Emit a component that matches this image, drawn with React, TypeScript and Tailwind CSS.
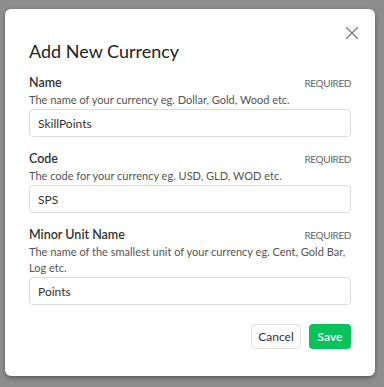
import { X } from 'lucide-react';

const fields = [
  {
    label: 'Name',
    hint: 'The name of your currency eg. Dollar, Gold, Wood etc.',
    value: 'SkillPoints',
  },
  {
    label: 'Code',
    hint: 'The code for your currency eg. USD, GLD, WOD etc.',
    value: 'SPS',
  },
  {
    label: 'Minor Unit Name',
    hint: 'The name of the smallest unit of your currency eg. Cent, Gold Bar, Log etc.',
    value: 'Points',
  },
];

const Field: React.FC<{ label: string; hint: string; value: string }> = ({ label, hint, value }) => {
  return (
    <div className="flex flex-col">
      <div className="flex items-center justify-between h-5">
        <span className="text-[12.5px] font-semibold text-[#333]">{label}</span>
        <span className="text-[10px] tracking-[-0.4px] text-[#666]">REQUIRED</span>
      </div>
      <p className="text-[11px] leading-4 text-[#555] mt-[-1px]">{hint}</p>
      <input
        readOnly
        value={value}
        className="mt-[1px] h-7 w-full rounded border border-[#dcdcdc] px-2 text-[12px] text-[#333] outline-none"
      />
    </div>
  );
};

const App: React.FC = () => {
  return (
    <div
      className="w-[384px] h-[387px] bg-[#8d8d8d] pt-[9px] pl-[5px]"
      style={{ fontFamily: 'Lato, "Open Sans", sans-serif' }}
    >
      <div className="relative w-[370px] h-[367px] rounded-md bg-white px-6 pt-[28px] shadow-[0_2px_4px_rgba(0,0,0,0.35)]">
        <button className="absolute right-[12px] top-[13px] text-[#777]">
          <X size={22} strokeWidth={1.3} />
        </button>
        <h2 className="text-[18px] leading-7 text-[#222] mb-[8px]">Add New Currency</h2>
        <div className="flex flex-col gap-3">
          {fields.map((f) => (
            <Field key={f.label} {...f} />
          ))}
        </div>
        <div className="flex justify-end gap-[8px] mt-[19px]">
          <button className="h-[25px] w-[50px] flex items-center justify-center rounded border border-[#e0e0e0] bg-white text-[12px] text-[#333]">
            Cancel
          </button>
          <button className="h-[25px] w-[42px] flex items-center justify-center rounded bg-[#08c25a] text-[12px] font-semibold text-white">
            Save
          </button>
        </div>
      </div>
    </div>
  );
};

export default App;
